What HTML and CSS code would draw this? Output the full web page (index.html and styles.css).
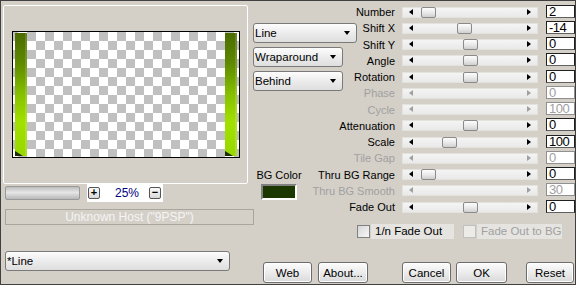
FILE: index.html
```html
<!DOCTYPE html>
<html lang="en">
<head>
  <meta charset="UTF-8" />
  <title>Line Filter</title>
  <link rel="stylesheet" href="styles.css">
</head>
<body>
  <div class="window">
    <div class="left">
      <div class="preview-group">
        <div class="canvas">
          <div class="bar"></div>
          <div class="bar"></div>
        </div>
      </div>

      <div class="zoom-row">
        <div class="zoom-bar"></div>
        <div class="zoom-box">
          <span class="mini-btn">+</span>
          <span class="zoom-value">25%</span>
          <span class="mini-btn">&minus;</span>
        </div>
      </div>

      <div class="status">Unknown Host ("9PSP")</div>
      <div class="select preset">*Line</div>
    </div>

    <div class="right">
      <div class="controls">
        <div class="modes">
          <div class="select wide">Line</div>
          <div class="select">Wraparound</div>
          <div class="select">Behind</div>
          <div class="bg-color">
            <div>BG Color</div>
            <div class="swatch"></div>
          </div>
        </div>

        <div class="sliders">
          <span class="label">Number</span>
          <div class="track"><b class="thumb" style="left: 18px"></b></div>
          <span class="field">2</span>

          <span class="label">Shift X</span>
          <div class="track"><b class="thumb" style="left: 54px"></b></div>
          <span class="field">-14</span>

          <span class="label">Shift Y</span>
          <div class="track"><b class="thumb" style="left: 60px"></b></div>
          <span class="field">0</span>

          <span class="label">Angle</span>
          <div class="track"><b class="thumb" style="left: 60px"></b></div>
          <span class="field">0</span>

          <span class="label">Rotation</span>
          <div class="track"><b class="thumb" style="left: 60px"></b></div>
          <span class="field">0</span>

          <span class="label off">Phase</span>
          <div class="track off"></div>
          <span class="field off">0</span>

          <span class="label off">Cycle</span>
          <div class="track off"></div>
          <span class="field off">100</span>

          <span class="label">Attenuation</span>
          <div class="track"><b class="thumb" style="left: 60px"></b></div>
          <span class="field">0</span>

          <span class="label">Scale</span>
          <div class="track"><b class="thumb" style="left: 39px"></b></div>
          <span class="field">100</span>

          <span class="label off">Tile Gap</span>
          <div class="track off"></div>
          <span class="field off">0</span>

          <span class="label">Thru BG Range</span>
          <div class="track"><b class="thumb" style="left: 18px"></b></div>
          <span class="field">0</span>

          <span class="label off">Thru BG Smooth</span>
          <div class="track off"></div>
          <span class="field off">30</span>

          <span class="label">Fade Out</span>
          <div class="track"><b class="thumb" style="left: 60px"></b></div>
          <span class="field">0</span>
        </div>
      </div>

      <div class="checks">
        <label class="check"><span class="box"></span><span class="check-text">1/n Fade Out</span></label>
        <label class="check off"><span class="box"></span><span class="check-text">Fade Out to BG</span></label>
      </div>

      <div class="buttons">
        <button class="btn btn-web">Web</button>
        <button class="btn btn-about">About...</button>
        <button class="btn btn-cancel">Cancel</button>
        <button class="btn btn-ok">OK</button>
        <button class="btn btn-reset">Reset</button>
      </div>
    </div>
  </div>
</body>
</html>
```

FILE: styles.css
```css
body {
  margin: 0;
  font-family: 'Liberation Sans', Arial, sans-serif;
  font-size: 11px;
  color: #000;
}

.window {
  width: 576px;
  height: 285px;
  box-sizing: border-box;
  border: 1px solid #404040;
  background: #d4d0c8;
  display: flex;
  overflow: hidden;
  white-space: nowrap;
}

/* left side: preview */
.left {
  width: 252px;
  flex: none;
  padding: 4px 0 0 2px;
  box-sizing: border-box;
}

.preview-group {
  width: 245px;
  height: 179px;
  box-sizing: border-box;
  border: 1px solid #fff;
  border-radius: 2px;
  padding: 25px 0 0 8px;
}

.canvas {
  width: 228px;
  height: 127px;
  box-sizing: border-box;
  border: 1px solid #000;
  padding: 1px 2px;
  display: flex;
  justify-content: space-between;
  background-color: #fff;
  background-image: conic-gradient(#c0c0c0 25%, #fff 0 50%, #c0c0c0 0 75%, #fff 0);
  background-size: 18px 18px;
  background-position: 5px 0;
}

.bar {
  width: 12px;
  position: relative;
  background: linear-gradient(#4b6b00, #5f8a00 25%, #86c000 50%, #a2e000 72%, #98d800);
  box-shadow: inset -2px 0 0 rgba(255,255,255,0.15);
}

.bar::after {
  content: "";
  position: absolute;
  left: 0;
  bottom: 0;
  border-left: 8px solid #1f2e00;
  border-top: 5px solid transparent;
}

.zoom-row {
  display: flex;
  align-items: center;
  height: 18px;
}

.zoom-bar {
  width: 75px;
  height: 14px;
  margin-left: 2px;
  box-sizing: border-box;
  border: 1px solid #999;
  border-radius: 2px;
  background: linear-gradient(#bdbdbd, #e6e6e6 45%, #dadada 60%, #b8b8b8);
}

.zoom-box {
  width: 76px;
  height: 18px;
  margin-left: 7px;
  background: #fff;
  display: flex;
  align-items: center;
  padding: 0 2px 0 1px;
  box-sizing: border-box;
}

.mini-btn {
  width: 12px;
  height: 12px;
  box-sizing: border-box;
  border: 1px solid #555;
  border-radius: 2px;
  background: linear-gradient(#fafafa, #d8d8d8);
  font-size: 11px;
  font-weight: bold;
  line-height: 9px;
  text-align: center;
}

.zoom-value {
  color: #000080;
  font-size: 12px;
  margin: 0 auto 0 15px;
}

.status {
  width: 249px;
  height: 16px;
  margin: 7px 0 0 2px;
  box-sizing: border-box;
  border: 1px solid #aaa69e;
  color: #f4f4f4;
  text-align: center;
  line-height: 14px;
  font-size: 12px;
}

.select {
  height: 20px;
  width: 90px;
  box-sizing: border-box;
  border: 1px solid #7a7a7a;
  border-radius: 3px;
  background: linear-gradient(#fdfdfd, #ececec 50%, #dedede);
  display: flex;
  align-items: center;
  justify-content: space-between;
  padding: 0 6px 0 1px;
  font-size: 11.5px;
}

.select::after {
  content: "";
  border-left: 3px solid transparent;
  border-right: 3px solid transparent;
  border-top: 4px solid #000;
}

.select.wide {
  width: 104px;
}

.select.preset {
  width: 225px;
  margin: 26px 0 0 2px;
}

/* right side: controls */
.right {
  width: 322px;
  flex: none;
  padding-top: 3px;
}

.controls {
  display: grid;
}

.modes,
.sliders {
  grid-area: 1 / 1;
}

.modes {
  display: flex;
  flex-direction: column;
  align-items: flex-start;
  gap: 4px;
  padding-top: 19px;
}

.bg-color {
  margin: 74px 0 0 3px;
  width: 46px;
  text-align: center;
}

.swatch {
  width: 36px;
  height: 16px;
  margin: 3px auto 0;
  box-sizing: border-box;
  border: 2px solid;
  border-color: #808080 #fff #fff #808080;
  background: #1c3800;
}

.sliders {
  display: grid;
  grid-template-columns: 142px 143px 37px;
  grid-auto-rows: 16.25px;
}

.label {
  align-self: center;
  text-align: right;
}

.label.off {
  color: #a0a0a0;
}

.track {
  position: relative;
  align-self: center;
  height: 11px;
  margin-left: 7px;
  width: 136px;
  box-sizing: border-box;
  border: 1px solid #e4e2dd;
  background: linear-gradient(#f4f4f4, #e9e9e9);
}

.track::before,
.track::after {
  content: "";
  position: absolute;
  top: 1px;
  border-top: 3.5px solid transparent;
  border-bottom: 3.5px solid transparent;
}

.track::before {
  left: 6px;
  border-right: 4px solid #000;
}

.track::after {
  right: 6px;
  border-left: 4px solid #000;
}

.track.off::before {
  border-right-color: #a0a0a0;
}

.track.off::after {
  border-left-color: #a0a0a0;
}

.thumb {
  position: absolute;
  top: -1px;
  width: 15px;
  height: 11px;
  box-sizing: border-box;
  border: 1px solid #8a8a8a;
  border-radius: 2px;
  background: linear-gradient(#fdfdfd, #e8e8e8 55%, #cfcfcf);
}

.field {
  justify-self: end;
  align-self: start;
  margin-top: 0.5px;
  width: 29px;
  height: 13px;
  box-sizing: border-box;
  border: 1px solid #202020;
  border-bottom-color: #606060;
  background: #fff;
  padding-left: 2px;
  font-size: 13px;
  letter-spacing: -0.5px;
  line-height: 12px;
}

.field.off {
  color: #a0a0a0;
  border-color: #909090;
}

.checks {
  display: flex;
  gap: 9px;
  margin: 9px 0 0 104px;
  height: 15px;
}

.check {
  display: flex;
  align-items: center;
  width: 97px;
}

.check + .check {
  width: 96px;
}

.box {
  width: 13px;
  height: 13px;
  flex: none;
  box-sizing: border-box;
  border: 1px solid #808080;
  background: linear-gradient(135deg, #d6d6d6, #f8f8f8);
}

.check-text {
  flex: 1;
  align-self: stretch;
  margin-left: 1px;
  padding-left: 4px;
  background: #e6e4e0;
  line-height: 15px;
  font-size: 11.5px;
}

.check.off .check-text {
  color: #a0a0a0;
}

.check.off .box {
  border-color: #c0c0c0;
  background: #ecebe8;
}

.buttons {
  display: flex;
  margin-top: 23px;
}

.btn {
  height: 21px;
  padding: 0;
  box-sizing: border-box;
  border: 1px solid #6c6c6c;
  border-radius: 3px;
  background: linear-gradient(#fcfcfc, #ececec 50%, #d9d9d9);
  box-shadow: inset 0 0 0 1px #fff;
  font-family: 'Liberation Sans', Arial, sans-serif;
  font-size: 11.5px;
  color: #000;
}

.btn-web { width: 49px; margin-left: 10px; }
.btn-about { width: 50px; margin-left: 6px; }
.btn-cancel { width: 49px; margin-left: 34px; }
.btn-ok { width: 51px; margin-left: 5px; }
.btn-reset { width: 48px; margin-left: 19px; }
```
